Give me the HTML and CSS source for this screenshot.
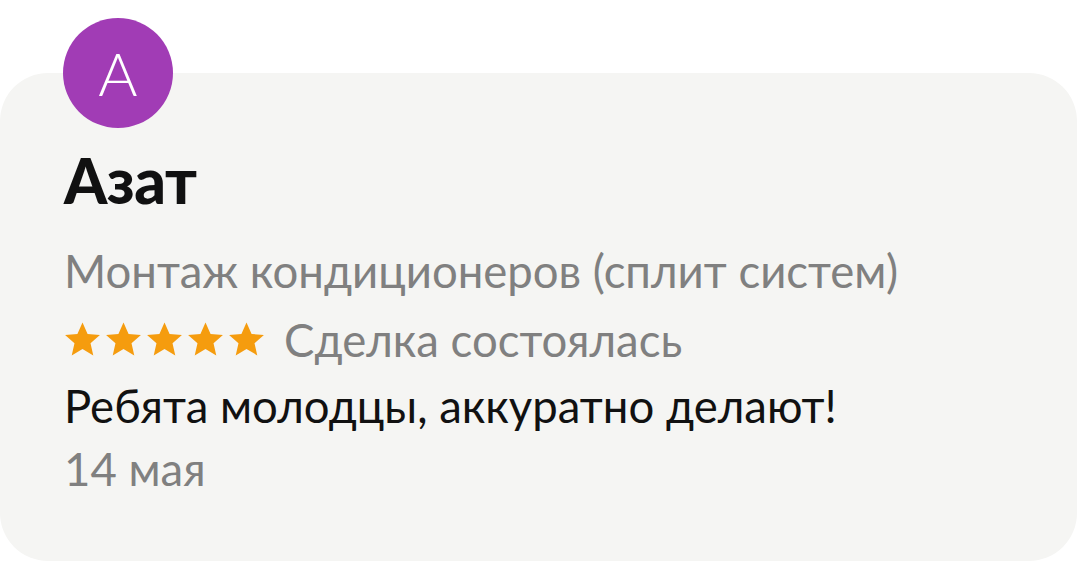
FILE: index.html
```html
<!DOCTYPE html>
<html lang="ru">
<head>
<meta charset="utf-8">
<link rel="stylesheet" href="styles.css">
</head>
<body>
<div class="page">
  <div class="card">
    <div class="avatar">А</div>
    <div class="name">Азат</div>
    <div class="service">Монтаж кондиционеров (сплит систем)</div>
    <div class="rating">
      <div class="stars">
        <svg class="star" viewBox="0 0 24 24"><path d="M12 1l3.3 7.4 8 .7-6.1 5.3 1.8 7.9L12 18.2l-7 4.1 1.8-7.9-6.1-5.3 8-.7z"/></svg>
        <svg class="star" viewBox="0 0 24 24"><path d="M12 1l3.3 7.4 8 .7-6.1 5.3 1.8 7.9L12 18.2l-7 4.1 1.8-7.9-6.1-5.3 8-.7z"/></svg>
        <svg class="star" viewBox="0 0 24 24"><path d="M12 1l3.3 7.4 8 .7-6.1 5.3 1.8 7.9L12 18.2l-7 4.1 1.8-7.9-6.1-5.3 8-.7z"/></svg>
        <svg class="star" viewBox="0 0 24 24"><path d="M12 1l3.3 7.4 8 .7-6.1 5.3 1.8 7.9L12 18.2l-7 4.1 1.8-7.9-6.1-5.3 8-.7z"/></svg>
        <svg class="star" viewBox="0 0 24 24"><path d="M12 1l3.3 7.4 8 .7-6.1 5.3 1.8 7.9L12 18.2l-7 4.1 1.8-7.9-6.1-5.3 8-.7z"/></svg>
      </div>
      <span class="status">Сделка состоялась</span>
    </div>
    <div class="text">Ребята молодцы, аккуратно делают!</div>
    <div class="date">14 мая</div>
  </div>
</div>
</body>
</html>
```

FILE: styles.css
```css
html, body {
  margin: 0;
  padding: 0;
  background: #ffffff;
}
body {
  font-family: "Lato", "Noto Sans", sans-serif;
  width: 1080px;
  height: 571px;
  overflow: hidden;
}
.page {
  padding-top: 73px;
}
.card {
  display: flex;
  flex-direction: column;
  align-items: flex-start;
  width: 1077px;
  height: 488px;
  box-sizing: border-box;
  background: #f5f5f3;
  border-radius: 48px;
  padding: 0 0 0 64px;
}
.avatar {
  width: 110px;
  height: 110px;
  margin-top: -55px;
  margin-left: -1px;
  border-radius: 50%;
  background: #a13cb5;
  color: #ffffff;
  font-family: "Lato", sans-serif;
  font-weight: 300;
  font-size: 60px;
  display: flex;
  align-items: center;
  justify-content: center;
  line-height: 1;
}
.name {
  margin-top: 12px;
  font-family: "Lato", sans-serif;
  font-weight: 900;
  font-size: 62px;
  line-height: 80px;
  color: #111111;
  letter-spacing: -0.5px;
}
.service {
  margin-top: 17px;
  font-size: 45.5px;
  line-height: 68px;
  color: #808080;
}
.rating {
  display: flex;
  align-items: center;
  gap: 19px;
  height: 68px;
}
.stars {
  display: flex;
  gap: 4px;
}
.star {
  width: 37px;
  height: 37px;
  fill: #f59c0e;
}
.status {
  font-size: 45.5px;
  color: #808080;
}
.text {
  font-size: 45.5px;
  line-height: 66px;
  color: #111111;
}
.date {
  margin-top: -3px;
  font-size: 45.5px;
  line-height: 66px;
  color: #808080;
}
```
